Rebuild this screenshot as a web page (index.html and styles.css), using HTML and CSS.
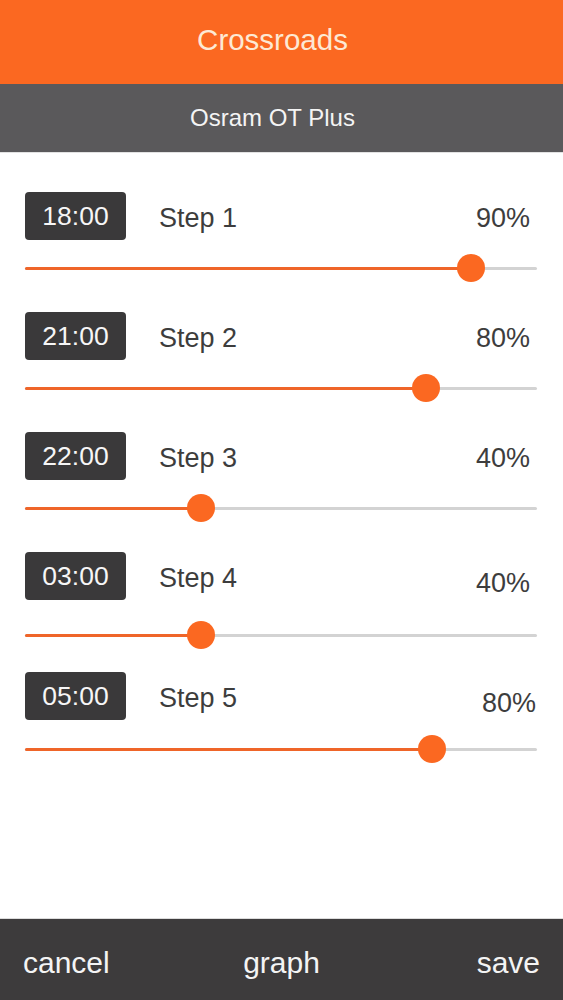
FILE: index.html
```html
<!DOCTYPE html>
<html lang="en">
<head>
<meta charset="utf-8">
<title>Crossroads</title>
<link rel="stylesheet" href="styles.css">
</head>
<body>
<div class="app">
  <header class="titlebar">Crossroads</header>
  <div class="subbar">Osram OT Plus</div>
  <main class="steps">
    <section class="step">
      <div class="step-head">
        <span class="time">18:00</span>
        <span class="label">Step 1</span>
        <span class="pct">90%</span>
      </div>
      <div class="slider" style="--pos: 87.1%">
        <div class="track"></div>
        <div class="fill"></div>
        <div class="thumb"></div>
      </div>
    </section>
    <section class="step">
      <div class="step-head">
        <span class="time">21:00</span>
        <span class="label">Step 2</span>
        <span class="pct">80%</span>
      </div>
      <div class="slider" style="--pos: 78.3%">
        <div class="track"></div>
        <div class="fill"></div>
        <div class="thumb"></div>
      </div>
    </section>
    <section class="step">
      <div class="step-head">
        <span class="time">22:00</span>
        <span class="label">Step 3</span>
        <span class="pct">40%</span>
      </div>
      <div class="slider" style="--pos: 34.4%">
        <div class="track"></div>
        <div class="fill"></div>
        <div class="thumb"></div>
      </div>
    </section>
    <section class="step step--shifted">
      <div class="step-head">
        <span class="time">03:00</span>
        <span class="label">Step 4</span>
        <span class="pct pct--low">40%</span>
      </div>
      <div class="slider" style="--pos: 34.4%">
        <div class="track"></div>
        <div class="fill"></div>
        <div class="thumb"></div>
      </div>
    </section>
    <section class="step">
      <div class="step-head">
        <span class="time">05:00</span>
        <span class="label">Step 5</span>
        <span class="pct pct--low pct--wide">80%</span>
      </div>
      <div class="slider slider--mid" style="--pos: 79.5%">
        <div class="track"></div>
        <div class="fill"></div>
        <div class="thumb"></div>
      </div>
    </section>
  </main>
  <footer class="toolbar">
    <span class="tool tool--left">cancel</span>
    <span class="tool tool--center">graph</span>
    <span class="tool tool--right">save</span>
  </footer>
</div>
</body>
</html>
```
FILE: styles.css
```css
* { box-sizing: border-box; }
html, body { margin: 0; padding: 0; background: #ffffff; }
body {
  font-family: "Liberation Sans", Arial, Helvetica, sans-serif;
  color: #3a3a3a;
}
.app {
  display: flex;
  flex-direction: column;
  height: 1000px;
  width: 563px;
  overflow: hidden;
}
.titlebar {
  height: 84px;
  background: #fb6821;
  color: #fde9d4;
  font-size: 29.5px;
  display: flex;
  align-items: center;
  justify-content: center;
  padding: 0 18px 4px 0;
}
.subbar {
  height: 69px;
  background: #5a595b;
  color: #f4f4f4;
  font-size: 24px;
  display: flex;
  align-items: center;
  justify-content: center;
  padding: 0 18px 0 0;
  border-bottom: 1px solid #e2e2e2;
}
.steps {
  flex: 1;
  display: flex;
  flex-direction: column;
  padding: 39px 26px 0 25px;
  gap: 30px;
}
.step {
  display: flex;
  flex-direction: column;
  gap: 14px;
}
.step--shifted { gap: 21px; margin-bottom: -7px; }
.step-head {
  display: flex;
  align-items: center;
  height: 48px;
}
.time {
  width: 101px;
  height: 48px;
  border-radius: 4px;
  background: #3a393a;
  color: #f6f6f6;
  font-size: 26.5px;
  display: flex;
  align-items: center;
  justify-content: center;
}
.label {
  margin-left: 33px;
  font-size: 27px;
  color: #3d3d3d;
  flex: 1;
  padding-top: 4px;
}
.pct {
  font-size: 27px;
  color: #3d3d3d;
  margin-right: 7px;
  padding-top: 4px;
}
.pct--low { padding-top: 14px; }
.pct--wide { margin-right: 1px; }
.slider--mid { margin-top: 1px; }
.slider {
  position: relative;
  height: 28px;
}
.track {
  position: absolute;
  left: 0;
  right: 0;
  top: 12.5px;
  height: 3px;
  background: #d3d3d3;
  border-radius: 2px;
}
.fill {
  position: absolute;
  left: 0;
  top: 12.5px;
  height: 3px;
  width: var(--pos);
  background: #ef6529;
  border-radius: 2px;
}
.thumb {
  position: absolute;
  top: 0;
  left: var(--pos);
  width: 28px;
  height: 28px;
  margin-left: -14px;
  border-radius: 50%;
  background: #fb6821;
}
.toolbar {
  height: 82px;
  background: #3d3b3c;
  border-top: 1px solid #dcdcdc;
  display: grid;
  grid-template-columns: 1fr auto 1fr;
  align-items: center;
  padding: 6px 23px 0 23px;
  color: #f4f4f4;
  font-size: 30px;
}
.tool--left { justify-self: start; }
.tool--center { justify-self: center; }
.tool--right { justify-self: end; }
```
